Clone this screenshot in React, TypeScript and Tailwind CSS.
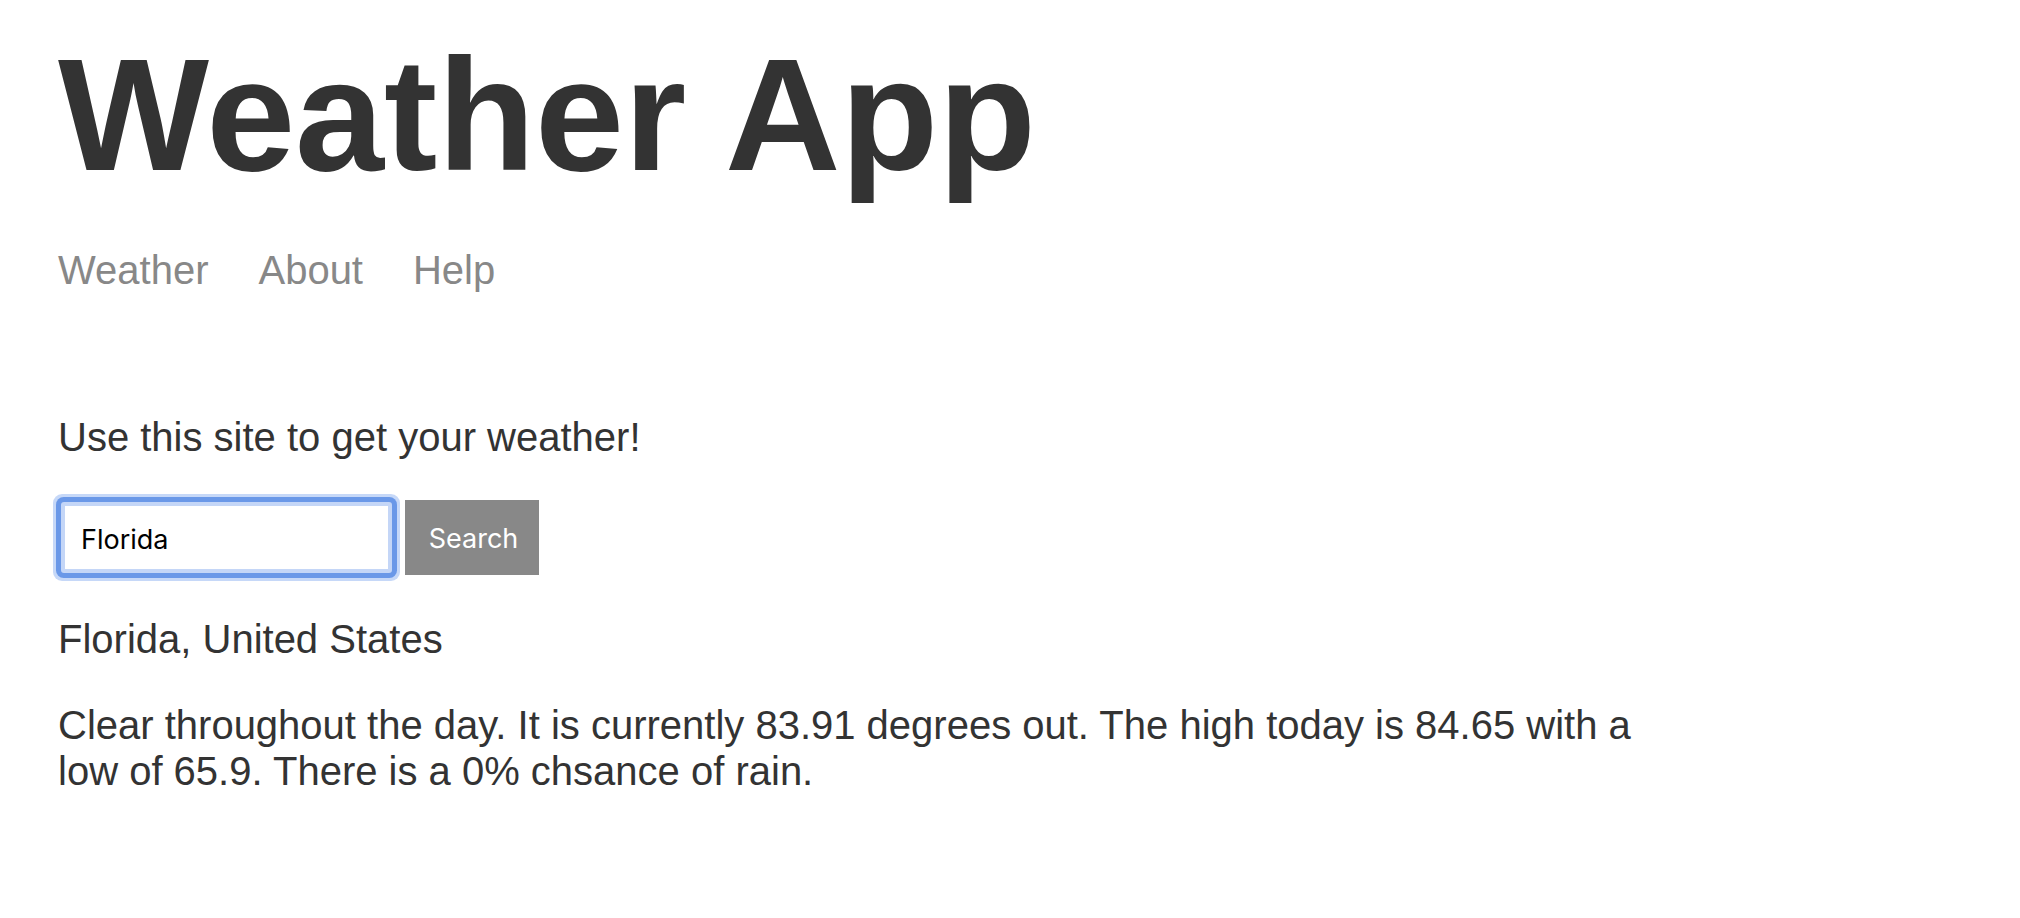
import React, { useState } from 'react';

const navItems = ['Weather', 'About', 'Help'];

export default function App() {
  const [location, setLocation] = useState('Florida');

  return (
    <div className="min-h-screen bg-white pl-[58px] text-[#333333]" style={{ fontFamily: '"Liberation Sans", Arial, sans-serif' }}>
      <div className="w-[1600px]">
        <header>
          <h1 className="mt-[35px] text-[160px] font-bold leading-[160px]">Weather App</h1>
          <nav className="mt-[55px] flex gap-[50px] text-[40px] leading-[40px] text-[#888888]">
            {navItems.map((item) => (
              <a key={item} href="#" className="no-underline">
                {item}
              </a>
            ))}
          </nav>
        </header>

        <main>
          <p className="mt-[127px] text-[40px] leading-[40px]">Use this site to get your weather!</p>

          <form className="mt-[43px] flex h-[75px] items-center gap-[13px]" onSubmit={(e) => e.preventDefault()}>
            <input
              value={location}
              onChange={(e) => setLocation(e.target.value)}
              className="ml-[3px] h-[71px] w-[331px] rounded-[3px] border-[4px] border-[#c4d6f7] bg-white pl-[16px] pt-[4px] text-[27px] text-black shadow-[0_0_0_5px_#6a98e8,0_0_0_8px_#c6d8f8] outline-none"
              style={{ fontFamily: 'Inter, "Liberation Sans", sans-serif' }}
            />
            <button
              type="submit"
              className="flex h-[75px] w-[134px] items-center justify-center bg-[#888888] pl-[3px] pt-[4px] text-[27px] text-white"
              style={{ fontFamily: 'Inter, "Liberation Sans", sans-serif' }}
            >
              Search
            </button>
          </form>

          <p className="mt-[44px] text-[40px] leading-[40px]">Florida, United States</p>
          <p className="mt-[43px] text-[40px] leading-[46px]">
            Clear throughout the day. It is currently 83.91 degrees out. The high today is 84.65 with a low of 65.9. There is a 0% chsance of rain.
          </p>
        </main>
      </div>
    </div>
  );
}
